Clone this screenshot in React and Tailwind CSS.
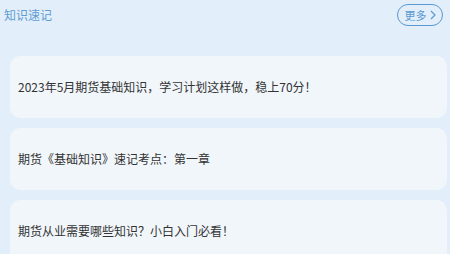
import React from 'react';

const items = [
  '2023年5月期货基础知识，学习计划这样做，稳上70分！',
  '期货《基础知识》速记考点：第一章',
  '期货从业需要哪些知识？小白入门必看！',
];

export default function App() {
  return (
    <div
      className="w-[450px] h-[254px] overflow-hidden bg-[#e2eef9]"
      style={{ fontFamily: '"Noto Sans CJK SC", "Noto Sans", sans-serif' }}
    >
      <div className="flex items-center justify-between pl-[4px] pr-[7px] pt-[4px] h-[26px]">
        <span className="text-[12px] leading-none text-[#5d9dd4]">知识速记</span>
        <button className="flex items-center h-[22px] w-[46px] justify-center gap-[3px] rounded-full border border-[#5a9ad2] text-[11px] leading-none text-[#5a9ad2]">
          <span>更多</span>
          <svg width="6" height="10" viewBox="0 0 6 10" fill="none">
            <path d="M1 1 L5 5 L1 9" stroke="#5a9ad2" strokeWidth="1.2" />
          </svg>
        </button>
      </div>
      <div className="flex flex-col gap-[10px] pl-[10px] pr-[3px] pt-[30px]">
        {items.map((t) => (
          <div
            key={t}
            className="h-[62px] shrink-0 flex items-center rounded-[10px] bg-[#f1f6fb] px-[8px] text-[12px] text-[#333]"
          >
            {t}
          </div>
        ))}
      </div>
    </div>
  );
}
